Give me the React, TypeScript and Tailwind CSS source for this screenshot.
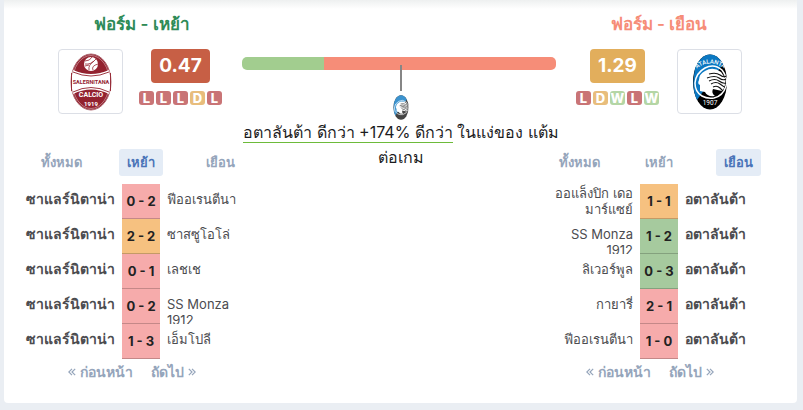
import { useState } from "react";
import clsx from "clsx";

type Result = "W" | "D" | "L";

interface Match {
  home: string;
  away: string;
  score: string;
  result: Result;
  tall?: boolean;
}

const homeMatches: Match[] = [
  { home: "ซาแลร์นิตาน่า", away: "ฟีออเรนตีนา", score: "0 - 2", result: "L" },
  { home: "ซาแลร์นิตาน่า", away: "ซาสซูโอโล่", score: "2 - 2", result: "D" },
  { home: "ซาแลร์นิตาน่า", away: "เลชเช", score: "0 - 1", result: "L" },
  { home: "ซาแลร์นิตาน่า", away: "SS Monza 1912", score: "0 - 2", result: "L" },
  { home: "ซาแลร์นิตาน่า", away: "เอ็มโปลี", score: "1 - 3", result: "L" },
];

const awayMatches: Match[] = [
  { home: "ออแล็งปิก เดอ มาร์แซย์", away: "อตาลันต้า", score: "1 - 1", result: "D", tall: true },
  { home: "SS Monza 1912", away: "อตาลันต้า", score: "1 - 2", result: "W" },
  { home: "ลิเวอร์พูล", away: "อตาลันต้า", score: "0 - 3", result: "W" },
  { home: "กายารี่", away: "อตาลันต้า", score: "2 - 1", result: "L" },
  { home: "ฟีออเรนตีนา", away: "อตาลันต้า", score: "1 - 0", result: "L" },
];

const badgeColor = {
  W: "bg-[#b4d6a5]",
  D: "bg-[#e8bd7c]",
  L: "bg-[#c97476]",
};

const scoreColor = {
  W: "bg-[#a6ca9e]",
  D: "bg-[#f6c180]",
  L: "bg-[#f6abab]",
};

const tabs = ["ทั้งหมด", "เหย้า", "เยือน"];

function SalernitanaLogo() {
  return (
    <svg viewBox="0 0 42 58" className="h-[58px] w-[42px]" role="img" aria-label="ซาแลร์นิตาน่า">
      <ellipse cx="21" cy="29" rx="20" ry="28" fill="#93222f" stroke="#b06a73" strokeWidth="1" />
      <ellipse cx="21" cy="29" rx="18.5" ry="26.5" fill="none" stroke="#d9b5b8" strokeWidth="0.6" />
      <path d="M3 17 Q21 25 39 17 Q42 29 39 41 Q21 32 3 41 Q0 29 3 17 Z" fill="#fff" />
      <path
        d="M3 19 Q21 27 39 19 M3 39 Q21 30 39 39 M1.5 20 V38 M40.5 20 V38"
        fill="none"
        stroke="#93222f"
        strokeWidth="0.9"
      />
      <circle cx="21" cy="11" r="7" fill="#fff" />
      <path
        d="M15 8 Q20 8 22 4 M15 11 Q21 12 26 6 M19 17 Q18 12 24 8 M23 17 Q21 13 28 11 M15 13 L19 12"
        fill="none"
        stroke="#93222f"
        strokeWidth="0.8"
      />
      <g fill="#93222f" fontFamily="Roboto, sans-serif" fontWeight="700" textAnchor="middle">
        <text x="21" y="31" fontSize="5.5">
          SALERNITANA
        </text>
        <g fill="#fff">
          <text x="21" y="44" fontSize="7">
            CALCIO
          </text>
          <text x="21" y="53" fontSize="6">
            1919
          </text>
        </g>
      </g>
    </svg>
  );
}

function AtalantaLogo({ small = false }: { small?: boolean }) {
  return (
    <svg
      viewBox="0 0 36 56"
      className={small ? "h-[25px] w-4" : "h-14 w-9"}
      role="img"
      aria-label="อตาลันต้า"
    >
      <ellipse cx="18" cy="28" rx="17" ry="27.5" fill={small ? "#444" : "#000"} />
      <path
        d="M5 46 L31 10 Q26 .5 18 .5 Q8 1 3 15 Q-1 34 5 46 Z"
        fill={small ? "#3b93cf" : "#0b78c2"}
      />
      <path
        d="M30 16 Q22 9 13 14 Q4 19 3 29 Q3 38 10 42 M30 16 Q36 24 34 32 Q31 42 22 44 Q15 45 10 42"
        fill="none"
        stroke="#fff"
        strokeWidth="1.5"
      />
      <path
        d="M8 31 Q5 30 7 26 Q7 20 13 17 Q21 12 29 18 L33 24 Q34 33 30 37 L21 35 Q19 39 23 42 Q15 43 13 38 L8 37 Z"
        fill="#fff"
      />
      <path
        d="M17 20 Q24 18 28 21 T34 22 M15 24 Q23 21 27 24 T34 25 M17 27 Q23 24 27 27 T34 29 M19 30 Q24 27 28 30 T33 33 M21 33 Q25 31 28 34 T31 37"
        fill="none"
        stroke="#111"
        strokeWidth="1.1"
      />
      {!small && (
        <g fill="#fff" fontFamily="Roboto, sans-serif" textAnchor="middle">
          <path id="atalanta-arc" d="M4 15 Q18 4 33 15" fill="none" />
          <text fontSize="6" fontWeight="500">
            <textPath href="#atalanta-arc" startOffset="50%">
              ATALANTA
            </textPath>
          </text>
          <text x="18" y="51" fontSize="6.5">
            1907
          </text>
        </g>
      )}
    </svg>
  );
}

function FormBadges({ form }: { form: Result[] }) {
  return (
    <div className="flex gap-0.5">
      {form.map((r, i) => (
        <span
          key={i}
          className={clsx(
            "flex h-3.5 w-[15px] items-end justify-center rounded-[3px] text-[13px] leading-[14px] font-extrabold text-white",
            badgeColor[r],
          )}
        >
          {r}
        </span>
      ))}
    </div>
  );
}

function TeamForm({
  points,
  color,
  form,
  away = false,
}: {
  points: string;
  color: string;
  form: Result[];
  away?: boolean;
}) {
  return (
    <div className={clsx("flex justify-center", away ? "flex-row-reverse gap-[18px]" : "gap-4")}>
      <div className="flex size-[65px] items-center justify-center rounded border border-[#dcdfe6]">
        {away ? <AtalantaLogo /> : <SalernitanaLogo />}
      </div>
      <div className="flex flex-col items-center gap-2">
        <div
          className={clsx(
            "flex h-[34px] items-center rounded px-2 text-[19px] font-bold text-white",
            color,
          )}
        >
          {points}
        </div>
        <FormBadges form={form} />
      </div>
    </div>
  );
}

function VenueTabs({ initial, label }: { initial: number; label: string }) {
  const [active, setActive] = useState(initial);

  return (
    <div role="tablist" aria-label={label} className="grid grid-cols-3 justify-items-center">
      {tabs.map((tab, i) => (
        <button
          key={tab}
          type="button"
          role="tab"
          aria-selected={active === i}
          className={clsx(
            "h-[27px] rounded-[3px] px-2 text-[13px] font-semibold whitespace-nowrap",
            active === i ? "bg-[#e4ecf6] text-[#4a74b8]" : "text-[#95a5bb]",
          )}
          onClick={() => setActive(i)}
        >
          {tab}
        </button>
      ))}
    </div>
  );
}

function MatchTable({ matches, away = false }: { matches: Match[]; away?: boolean }) {
  const nameClass = "h-[35px] overflow-hidden leading-4 text-[#4c4c50]";
  const ownClass = "text-[14px] font-semibold whitespace-nowrap";
  const rivalClass = "text-[13px]";

  return (
    <table className="w-full table-fixed border-collapse">
      <colgroup>
        <col className={away ? "w-[90px]" : ""} />
        <col className="w-[38px]" />
        <col className={away ? "" : "w-[82px]"} />
      </colgroup>
      <tbody>
        {matches.map((m, i) => (
          <tr key={i}>
            <td className="p-0">
              <div
                className={clsx(
                  nameClass,
                  "pr-[7px] text-right",
                  m.tall ? "pt-px" : "pt-[7px]",
                  away ? rivalClass : ownClass,
                )}
              >
                {m.home}
              </div>
            </td>
            <td className="p-0">
              <div
                className={clsx(
                  "flex h-[35px] items-center justify-center border-b border-black/20 pt-0.5 text-[13px] font-bold whitespace-nowrap text-[#222]",
                  scoreColor[m.result],
                )}
              >
                {m.score}
              </div>
            </td>
            <td className="p-0">
              <div className={clsx(nameClass, "pt-[7px] pl-[7px]", away ? ownClass : rivalClass)}>
                {m.away}
              </div>
            </td>
          </tr>
        ))}
      </tbody>
    </table>
  );
}

function Chevrons({ right = false }: { right?: boolean }) {
  return (
    <svg viewBox="0 0 8 8" className="size-2" fill="none" stroke="currentColor" strokeWidth="1.2">
      <path d={right ? "M.8 .8 4 4 .8 7.2 M4 .8 7.2 4 4 7.2" : "M4 .8 .8 4 4 7.2 M7.2 .8 4 4 7.2 7.2"} />
    </svg>
  );
}

function Pager() {
  return (
    <div className="flex justify-center gap-[18px] text-[14px] leading-[26px] font-semibold text-[#95a5bb]">
      <button type="button" className="flex items-center gap-1 whitespace-nowrap">
        <Chevrons />
        ก่อนหน้า
      </button>
      <button type="button" className="flex items-center gap-1 whitespace-nowrap">
        ถัดไป
        <Chevrons right />
      </button>
    </div>
  );
}

export default function App() {
  return (
    <div className="min-h-screen bg-[#eaeef3] pr-1.5 pb-1.5 pl-1 font-['Inter','Noto_Sans',sans-serif]">
      <main className="grid grid-cols-[minmax(0,1fr)_314px_minmax(0,1fr)] rounded-b bg-white bg-linear-to-b from-[#eef0f0] to-white to-[9px] pr-[3px] pb-[18px]">
        <section>
          <div className="pt-3 pl-[34px]">
            <h2 className="pb-3 pl-1 text-center text-[17px] leading-[25px] font-semibold text-[#2e8b57]">
              ฟอร์ม - เหย้า
            </h2>
            <TeamForm points="0.47" color="bg-[#c75f45]" form={["L", "L", "L", "D", "L"]} />
          </div>
          <div className="-mr-[18px] pt-[35px] pb-2 pl-[18px]">
            <VenueTabs initial={1} label="ฟอร์ม - เหย้า" />
          </div>
          <div className="pl-4">
            <MatchTable matches={homeMatches} />
          </div>
          <div className="pl-[18px]">
            <Pager />
          </div>
        </section>

        <section className="flex flex-col items-center pt-[57px] text-[#1c1c1e]">
          <div className="flex h-[13px] w-full overflow-hidden rounded-[5px]">
            <div className="w-[26%] bg-[#a2cd8f]" />
            <div className="flex-1 bg-[#f68d78]" />
          </div>
          <div className="z-10 -mt-[5px] mb-1 ml-1 h-[26px] w-0.5 bg-[#868686]" />
          <div className="ml-1">
            <AtalantaLogo small />
          </div>
          <p className="-mr-1.5 -ml-0.5 text-center text-[16px] leading-[25px]">
            <span className="border-b border-[#6dbb3a]">อตาลันต้า ดีกว่า +174% ดีกว่า</span> ในแง่ของ แต้มต่อเกม
          </p>
        </section>

        <section>
          <div className="pt-3 pr-8">
            <h2 className="pb-3 text-center text-[17px] leading-[25px] font-semibold text-[#f68d78]">
              ฟอร์ม - เยือน
            </h2>
            <TeamForm points="1.29" color="bg-[#e2ae5c]" form={["L", "D", "W", "L", "W"]} away />
          </div>
          <div className="-ml-4 pt-[35px] pr-4 pb-2">
            <VenueTabs initial={2} label="ฟอร์ม - เยือน" />
          </div>
          <div className="-ml-1.5 pr-3.5">
            <MatchTable matches={awayMatches} away />
          </div>
          <div className="pr-[50px]">
            <Pager />
          </div>
        </section>
      </main>
    </div>
  );
}
